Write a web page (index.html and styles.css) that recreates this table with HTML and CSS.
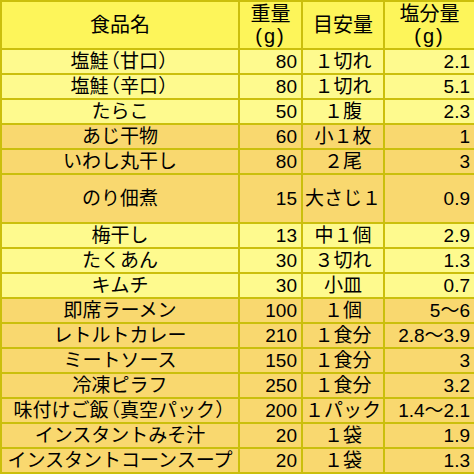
FILE: index.html
```html
<!DOCTYPE html>
<html lang="ja">
<head>
<meta charset="utf-8">
<link rel="stylesheet" href="styles.css">
</head>
<body>
<table class="salt">
  <colgroup>
    <col class="c-name">
    <col class="c-weight">
    <col class="c-unit">
    <col class="c-salt">
  </colgroup>
  <thead>
    <tr class="head">
      <th>食品名</th>
      <th>重量<br><span class="gram">(g)</span></th>
      <th>目安量</th>
      <th>塩分量<br><span class="gram">(g)</span></th>
    </tr>
  </thead>
  <tbody>
    <tr class="light"><td class="name">塩鮭<span class="p">（</span>甘口<span class="p">）</span></td><td class="num">80</td><td class="unit">１切れ</td><td class="num">2.1</td></tr>
    <tr class="light"><td class="name">塩鮭<span class="p">（</span>辛口<span class="p">）</span></td><td class="num">80</td><td class="unit">１切れ</td><td class="num">5.1</td></tr>
    <tr class="light"><td class="name">たらこ</td><td class="num">50</td><td class="unit">１腹</td><td class="num">2.3</td></tr>
    <tr class="orange"><td class="name">あじ干物</td><td class="num">60</td><td class="unit">小１枚</td><td class="num">1</td></tr>
    <tr class="orange"><td class="name">いわし丸干し</td><td class="num">80</td><td class="unit">２尾</td><td class="num">3</td></tr>
    <tr class="orange tall"><td class="name">のり佃煮</td><td class="num">15</td><td class="unit">大さじ１</td><td class="num">0.9</td></tr>
    <tr class="light"><td class="name">梅干し</td><td class="num">13</td><td class="unit">中１個</td><td class="num">2.9</td></tr>
    <tr class="light"><td class="name">たくあん</td><td class="num">30</td><td class="unit">３切れ</td><td class="num">1.3</td></tr>
    <tr class="light"><td class="name">キムチ</td><td class="num">30</td><td class="unit">小皿</td><td class="num">0.7</td></tr>
    <tr class="orange"><td class="name">即席ラーメン</td><td class="num">100</td><td class="unit">１個</td><td class="num">5～6</td></tr>
    <tr class="orange"><td class="name">レトルトカレー</td><td class="num">210</td><td class="unit">１食分</td><td class="num">2.8～3.9</td></tr>
    <tr class="orange"><td class="name">ミートソース</td><td class="num">150</td><td class="unit">１食分</td><td class="num">3</td></tr>
    <tr class="orange"><td class="name">冷凍ピラフ</td><td class="num">250</td><td class="unit">１食分</td><td class="num">3.2</td></tr>
    <tr class="orange"><td class="name">味付けご飯<span class="p">（</span>真空パック<span class="p">）</span></td><td class="num">200</td><td class="unit">１パック</td><td class="num">1.4～2.1</td></tr>
    <tr class="orange"><td class="name">インスタントみそ汁</td><td class="num">20</td><td class="unit">１袋</td><td class="num">1.9</td></tr>
    <tr class="orange"><td class="name">インスタントコーンスープ</td><td class="num">20</td><td class="unit">１袋</td><td class="num">1.3</td></tr>
  </tbody>
</table>
</body>
</html>
```

FILE: styles.css
```css
html, body {
  margin: 0;
  padding: 0;
  background: #ffffff;
}

.salt {
  border-collapse: collapse;
  table-layout: fixed;
  width: 474px;
  font-family: "Liberation Sans", "Noto Sans CJK JP", sans-serif;
  font-size: 19px;
  color: #000;
}

.c-name { width: 238px; }
.c-weight { width: 63px; }
.c-unit { width: 82px; }
.c-salt { width: 91px; }

.salt th,
.salt td {
  border: 2px solid #cbbf0c;
  padding: 0 2px;
  white-space: nowrap;
  overflow: hidden;
}

.salt th {
  background: #fdf55a;
  font-weight: normal;
  font-size: 20px;
  line-height: 22px;
  height: 46px;
  text-align: center;
}

.gram {
  letter-spacing: 2px;
}

.salt td {
  height: 23px;
  line-height: 23px;
}

.salt .tall td {
  height: 47px;
}

.light td { background: #fefa8e; }
.orange td { background: #f9d86f; }

.p {
  font-feature-settings: "palt";
  margin: 0 1px;
}

.name { text-align: center; }
.unit { text-align: center; }
.num { text-align: right; }
.salt td.num { padding-right: 4px; }
```
